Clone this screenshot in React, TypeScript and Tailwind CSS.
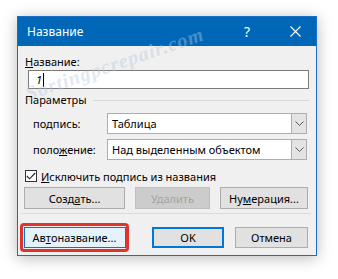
import React from "react";

const font = { fontFamily: '"Noto Sans", "Open Sans", sans-serif' };

function Chevron() {
  return (
    <svg width="9" height="5" viewBox="0 0 9 5" fill="none">
      <polyline points="0.5,0.5 4.5,4.5 8.5,0.5" stroke="#5a5a5a" strokeWidth="1" />
    </svg>
  );
}

function Combo({ value }: { value: string }) {
  return (
    <div className="flex h-[21px] w-[200px] border border-[#adadad] bg-white">
      <div className="flex flex-1 items-center pl-[4px] text-[11px] leading-none text-black">{value}</div>
      <div className="flex w-[15px] items-center justify-center border-l border-[#adadad] bg-[#e3e3e3]">
        <Chevron />
      </div>
    </div>
  );
}

function Btn({
  children,
  w,
  variant = "normal",
}: {
  children: React.ReactNode;
  w: string;
  variant?: "normal" | "disabled" | "default" | "focus";
}) {
  const base = "flex h-full items-center justify-center text-[11px] leading-none " + w;
  if (variant === "disabled")
    return <div className={base + " border border-[#bfbfbf] bg-[#cccccc] text-[#a3a3a3]"}>{children}</div>;
  if (variant === "default")
    return <div className={base + " border-2 border-[#0078d7] bg-[#e1e1e1] text-black"}>{children}</div>;
  if (variant === "focus")
    return <div className={base + " border border-[#0078d7] bg-[#e5f1fb] text-black"}>{children}</div>;
  return <div className={base + " border border-[#adadad] bg-[#e1e1e1] text-black"}>{children}</div>;
}

export default function App() {
  return (
    <div className="relative h-[279px] w-[338px] overflow-hidden bg-white" style={font}>
      <div className="ml-[17px] mt-[16px] flex h-[240px] w-[300px] flex-col border border-[#1a6ec4] bg-[#f0f0f0] shadow-[0_2px_14px_rgba(0,0,0,0.28)]">
        {/* Title bar */}
        <div className="flex h-[29px] items-center bg-[#0067b8] pl-[9px] text-white">
          <span className="text-[12px] leading-none">Название</span>
          <span className="ml-auto mr-[40px] text-[14px] leading-none">?</span>
          <svg className="mr-[15px]" width="11" height="11" viewBox="0 0 11 11">
            <path d="M0.5 0.5 L10.5 10.5 M10.5 0.5 L0.5 10.5" stroke="white" strokeWidth="1.1" />
          </svg>
        </div>

        {/* Body */}
        <div className="flex flex-1 flex-col pl-[7px] pr-[7px]">
          <div className="mt-[8px] h-[16px] text-[11px] leading-[16px] text-black">
            <u>Н</u>азвание:
          </div>
          <div className="ml-[3px] flex h-[19px] items-center border border-[#7a7a7a] bg-white pl-[7px]">
            <span className="text-[11px] italic leading-none text-black">1</span>
            <span className="ml-[1px] h-[14px] w-[1px] bg-black" />
          </div>

          <div className="mt-[3px] flex h-[16px] items-center">
            <span className="text-[11px] leading-[16px] text-black">Параметры</span>
            <span className="ml-[6px] h-[1px] flex-1 bg-[#d9d9d9]" />
          </div>

          <div className="mt-[5px] flex items-center pl-[8px]">
            <span className="w-[74px] text-[11px] leading-none text-black">
              по<u>д</u>пись:
            </span>
            <Combo value="Таблица" />
          </div>
          <div className="mt-[5px] flex items-center pl-[8px]">
            <span className="w-[74px] text-[11px] leading-none text-black">
              поло<u>ж</u>ение:
            </span>
            <Combo value="Над выделенным объектом" />
          </div>

          <div className="mt-[10px] flex h-[12px] items-center">
            <div className="flex h-[12px] w-[12px] items-center justify-center border border-[#333] bg-white">
              <svg width="10" height="8" viewBox="0 0 10 8">
                <polyline points="0.8,4 3.6,6.8 9.2,1" fill="none" stroke="#222" strokeWidth="1.1" />
              </svg>
            </div>
            <span className="ml-[4px] text-[11px] leading-none text-black">
              <u>И</u>сключить подпись из названия
            </span>
          </div>

          <div className="ml-[-1px] mt-[5px] flex h-[22px] gap-[10px]">
            <Btn w="w-[101px]">
              Созд<u>а</u>ть...
            </Btn>
            <Btn w="w-[75px]" variant="disabled">
              Удалить
            </Btn>
            <Btn w="w-[88px]">
              Ну<u>м</u>ерация...
            </Btn>
          </div>

          <div className="ml-[-4px] mr-[-2px] mt-[4px] h-[1px] bg-[#dadada]" />

          <div className="mt-[10px] flex h-[27px] items-center">
            <div className="ml-[-5px] flex h-[29px] w-[109px] items-center justify-center rounded-[4px] border-[3px] border-[#e0342a]">
              <div className="h-[21px]">
                <Btn w="w-[102px]" variant="focus">
                  Ав<u>т</u>оназвание...
                </Btn>
              </div>
            </div>
            <div className="ml-[23px] h-[21px]">
              <Btn w="w-[72px]" variant="default">
                OK
              </Btn>
            </div>
            <div className="ml-[11px] h-[21px]">
              <Btn w="w-[73px]">Отмена</Btn>
            </div>
          </div>
        </div>
      </div>

      {/* watermark */}
      <div
        className="pointer-events-none absolute left-[26px] top-[82px] w-max origin-[0%_50%] rotate-[-19deg] text-[20px] font-bold italic leading-[24px] tracking-[1px] text-[#b8c8e0] opacity-40"
        style={{ fontFamily: '"Liberation Serif", serif' }}
      >
        Sortingpcrepair.com
      </div>
    </div>
  );
}
